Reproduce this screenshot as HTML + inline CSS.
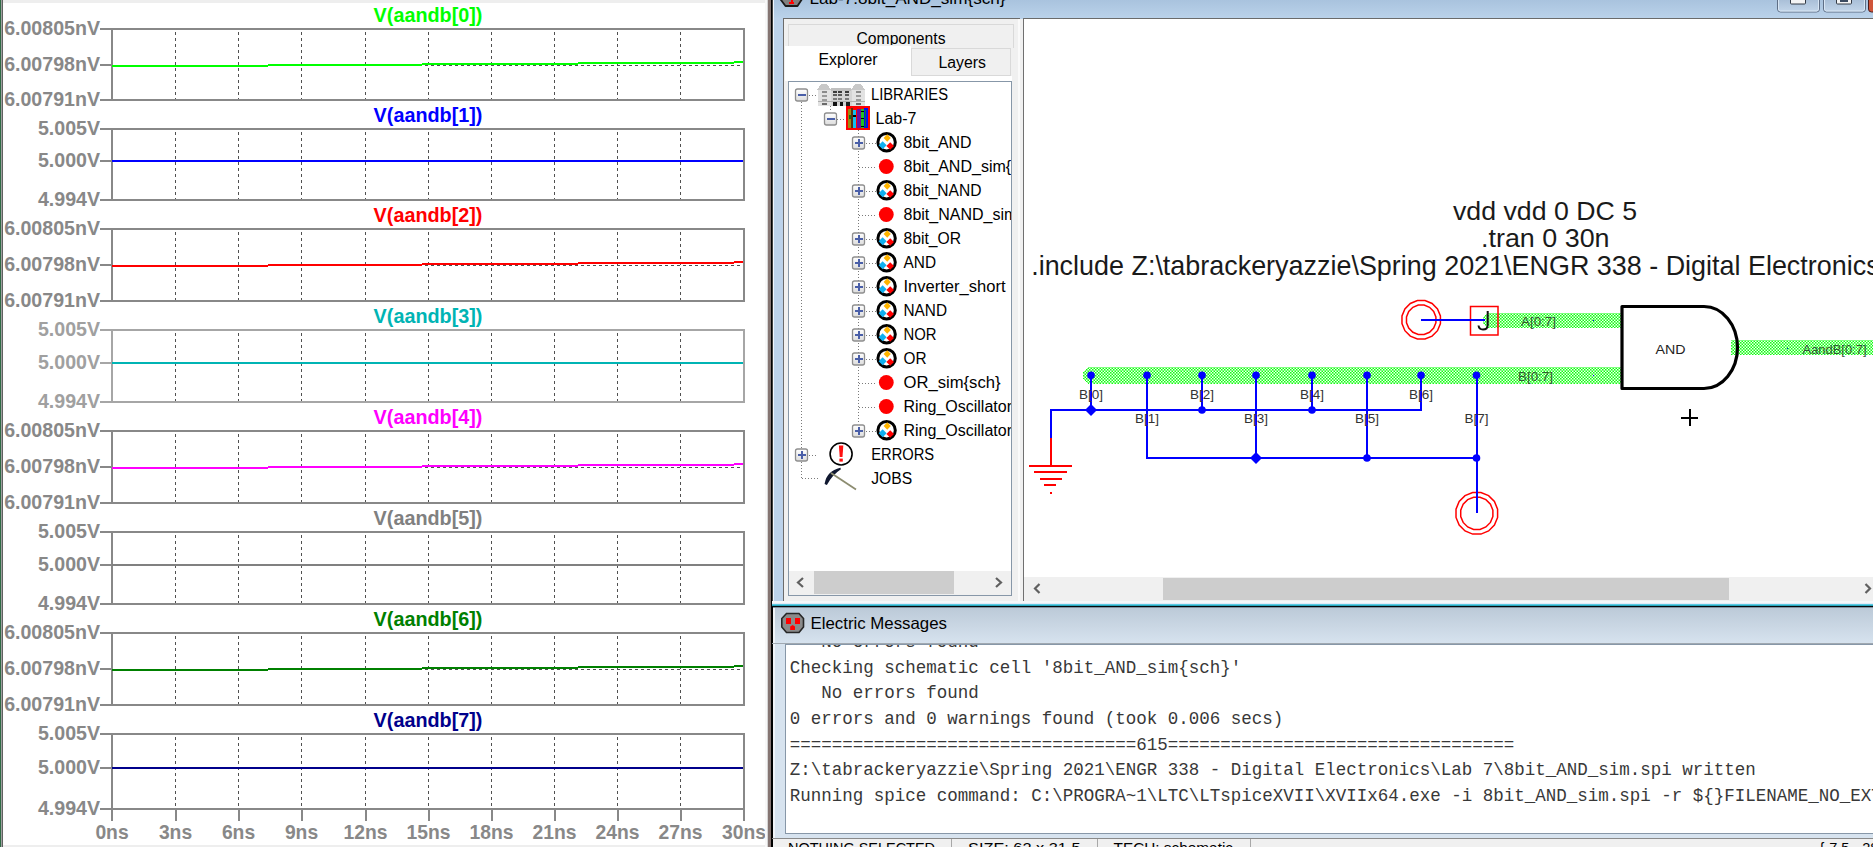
<!DOCTYPE html><html><head><meta charset="utf-8"><style>html,body{margin:0;padding:0;background:#fff;overflow:hidden}svg{display:block}text{white-space:pre}</style></head><body>
<svg width="1873" height="847" viewBox="0 0 1873 847" shape-rendering="crispEdges">
<defs>
<pattern id="bus" patternUnits="userSpaceOnUse" width="3" height="3"><rect x="0" y="0" width="3" height="3" fill="#80ff80"/><rect x="0" y="0" width="1" height="1" fill="#10ff10"/><rect x="2" y="2" width="1" height="1" fill="#10ff10"/><rect x="2" y="0" width="1" height="1" fill="#f0fff0"/><rect x="0" y="2" width="1" height="1" fill="#f0fff0"/></pattern>
<linearGradient id="tb" x1="0" y1="0" x2="0" y2="1"><stop offset="0" stop-color="#a9c3de"/><stop offset="1" stop-color="#bad2ea"/></linearGradient>
<linearGradient id="mb" x1="0" y1="0" x2="0" y2="1"><stop offset="0" stop-color="#bccad8"/><stop offset="1" stop-color="#d7e3ef"/></linearGradient>
<linearGradient id="btn" x1="0" y1="0" x2="0" y2="1"><stop offset="0" stop-color="#9fb6d0"/><stop offset="1" stop-color="#c3d6ea"/></linearGradient>
<linearGradient id="exp" x1="0" y1="0" x2="0" y2="1"><stop offset="0" stop-color="#ffffff"/><stop offset="1" stop-color="#dcdcdc"/></linearGradient>
<clipPath id="cv"><rect x="1025" y="19" width="848" height="558"/></clipPath>
<clipPath id="tree"><rect x="789" y="82" width="222" height="489"/></clipPath>
<clipPath id="msg"><rect x="786" y="645" width="1087" height="188"/></clipPath>
<clipPath id="ttl"><rect x="772" y="0" width="1101" height="18"/></clipPath>
</defs>
<rect x="0" y="0" width="767" height="847" fill="#ffffff" />
<rect x="3" y="0" width="764" height="3" fill="#eeeeee" />
<rect x="3" y="845" width="764" height="2" fill="#eeeeee" />
<rect x="0" y="0" width="1" height="847" fill="#2f6b45" />
<rect x="1" y="0" width="1" height="847" fill="#a0a0a0" />
<rect x="2" y="0" width="1" height="847" fill="#606060" />
<line x1="175.5" y1="32" x2="175.5" y2="100" stroke="#505050" stroke-width="1" stroke-dasharray="3 3"/>
<line x1="238.5" y1="32" x2="238.5" y2="100" stroke="#505050" stroke-width="1" stroke-dasharray="3 3"/>
<line x1="301.5" y1="32" x2="301.5" y2="100" stroke="#505050" stroke-width="1" stroke-dasharray="3 3"/>
<line x1="365.5" y1="32" x2="365.5" y2="100" stroke="#505050" stroke-width="1" stroke-dasharray="3 3"/>
<line x1="428.5" y1="32" x2="428.5" y2="100" stroke="#505050" stroke-width="1" stroke-dasharray="3 3"/>
<line x1="491.5" y1="32" x2="491.5" y2="100" stroke="#505050" stroke-width="1" stroke-dasharray="3 3"/>
<line x1="554.5" y1="32" x2="554.5" y2="100" stroke="#505050" stroke-width="1" stroke-dasharray="3 3"/>
<line x1="617.5" y1="32" x2="617.5" y2="100" stroke="#505050" stroke-width="1" stroke-dasharray="3 3"/>
<line x1="680.5" y1="32" x2="680.5" y2="100" stroke="#505050" stroke-width="1" stroke-dasharray="3 3"/>
<line x1="113" y1="65.5" x2="743" y2="65.5" stroke="#505050" stroke-width="1" stroke-dasharray="3 3"/>
<rect x="111" y="28" width="634" height="2" fill="#888888" />
<rect x="111" y="99" width="634" height="2" fill="#888888" />
<rect x="111" y="28" width="2" height="72" fill="#888888" />
<rect x="743" y="28" width="2" height="72" fill="#888888" />
<rect x="100" y="28" width="11" height="2" fill="#888888" />
<rect x="100" y="64" width="11" height="2" fill="#888888" />
<rect x="100" y="99" width="11" height="2" fill="#888888" />
<rect x="112" y="65" width="156" height="2" fill="#00ff00" />
<rect x="268" y="64" width="154" height="2" fill="#00ff00" />
<rect x="422" y="63" width="156" height="2" fill="#00ff00" />
<rect x="578" y="62" width="156" height="2" fill="#00ff00" />
<rect x="734" y="61" width="9" height="2" fill="#00ff00" />
<text x="100" y="35" font-family="Liberation Sans" font-size="19.6" fill="#888888" font-weight="bold" text-anchor="end" >6.00805nV</text>
<text x="100" y="71" font-family="Liberation Sans" font-size="19.6" fill="#888888" font-weight="bold" text-anchor="end" >6.00798nV</text>
<text x="100" y="106" font-family="Liberation Sans" font-size="19.6" fill="#888888" font-weight="bold" text-anchor="end" >6.00791nV</text>
<text x="428" y="22" font-family="Liberation Sans" font-size="19.8" fill="#00ff00" font-weight="bold" text-anchor="middle" >V(aandb[0])</text>
<line x1="175.5" y1="132" x2="175.5" y2="200" stroke="#505050" stroke-width="1" stroke-dasharray="3 3"/>
<line x1="238.5" y1="132" x2="238.5" y2="200" stroke="#505050" stroke-width="1" stroke-dasharray="3 3"/>
<line x1="301.5" y1="132" x2="301.5" y2="200" stroke="#505050" stroke-width="1" stroke-dasharray="3 3"/>
<line x1="365.5" y1="132" x2="365.5" y2="200" stroke="#505050" stroke-width="1" stroke-dasharray="3 3"/>
<line x1="428.5" y1="132" x2="428.5" y2="200" stroke="#505050" stroke-width="1" stroke-dasharray="3 3"/>
<line x1="491.5" y1="132" x2="491.5" y2="200" stroke="#505050" stroke-width="1" stroke-dasharray="3 3"/>
<line x1="554.5" y1="132" x2="554.5" y2="200" stroke="#505050" stroke-width="1" stroke-dasharray="3 3"/>
<line x1="617.5" y1="132" x2="617.5" y2="200" stroke="#505050" stroke-width="1" stroke-dasharray="3 3"/>
<line x1="680.5" y1="132" x2="680.5" y2="200" stroke="#505050" stroke-width="1" stroke-dasharray="3 3"/>
<line x1="113" y1="161.5" x2="743" y2="161.5" stroke="#505050" stroke-width="1" stroke-dasharray="3 3"/>
<rect x="111" y="128" width="634" height="2" fill="#888888" />
<rect x="111" y="199" width="634" height="2" fill="#888888" />
<rect x="111" y="128" width="2" height="72" fill="#888888" />
<rect x="743" y="128" width="2" height="72" fill="#888888" />
<rect x="100" y="128" width="11" height="2" fill="#888888" />
<rect x="100" y="160" width="11" height="2" fill="#888888" />
<rect x="100" y="199" width="11" height="2" fill="#888888" />
<rect x="112" y="160" width="631" height="2" fill="#0000ff" />
<text x="100" y="135" font-family="Liberation Sans" font-size="19.6" fill="#888888" font-weight="bold" text-anchor="end" >5.005V</text>
<text x="100" y="167" font-family="Liberation Sans" font-size="19.6" fill="#888888" font-weight="bold" text-anchor="end" >5.000V</text>
<text x="100" y="206" font-family="Liberation Sans" font-size="19.6" fill="#888888" font-weight="bold" text-anchor="end" >4.994V</text>
<text x="428" y="122" font-family="Liberation Sans" font-size="19.8" fill="#0000ff" font-weight="bold" text-anchor="middle" >V(aandb[1])</text>
<line x1="175.5" y1="232" x2="175.5" y2="301" stroke="#505050" stroke-width="1" stroke-dasharray="3 3"/>
<line x1="238.5" y1="232" x2="238.5" y2="301" stroke="#505050" stroke-width="1" stroke-dasharray="3 3"/>
<line x1="301.5" y1="232" x2="301.5" y2="301" stroke="#505050" stroke-width="1" stroke-dasharray="3 3"/>
<line x1="365.5" y1="232" x2="365.5" y2="301" stroke="#505050" stroke-width="1" stroke-dasharray="3 3"/>
<line x1="428.5" y1="232" x2="428.5" y2="301" stroke="#505050" stroke-width="1" stroke-dasharray="3 3"/>
<line x1="491.5" y1="232" x2="491.5" y2="301" stroke="#505050" stroke-width="1" stroke-dasharray="3 3"/>
<line x1="554.5" y1="232" x2="554.5" y2="301" stroke="#505050" stroke-width="1" stroke-dasharray="3 3"/>
<line x1="617.5" y1="232" x2="617.5" y2="301" stroke="#505050" stroke-width="1" stroke-dasharray="3 3"/>
<line x1="680.5" y1="232" x2="680.5" y2="301" stroke="#505050" stroke-width="1" stroke-dasharray="3 3"/>
<line x1="113" y1="265.5" x2="743" y2="265.5" stroke="#505050" stroke-width="1" stroke-dasharray="3 3"/>
<rect x="111" y="228" width="634" height="2" fill="#888888" />
<rect x="111" y="300" width="634" height="2" fill="#888888" />
<rect x="111" y="228" width="2" height="73" fill="#888888" />
<rect x="743" y="228" width="2" height="73" fill="#888888" />
<rect x="100" y="228" width="11" height="2" fill="#888888" />
<rect x="100" y="264" width="11" height="2" fill="#888888" />
<rect x="100" y="300" width="11" height="2" fill="#888888" />
<rect x="112" y="265" width="156" height="2" fill="#ff0000" />
<rect x="268" y="264" width="154" height="2" fill="#ff0000" />
<rect x="422" y="263" width="156" height="2" fill="#ff0000" />
<rect x="578" y="262" width="156" height="2" fill="#ff0000" />
<rect x="734" y="261" width="9" height="2" fill="#ff0000" />
<text x="100" y="235" font-family="Liberation Sans" font-size="19.6" fill="#888888" font-weight="bold" text-anchor="end" >6.00805nV</text>
<text x="100" y="271" font-family="Liberation Sans" font-size="19.6" fill="#888888" font-weight="bold" text-anchor="end" >6.00798nV</text>
<text x="100" y="307" font-family="Liberation Sans" font-size="19.6" fill="#888888" font-weight="bold" text-anchor="end" >6.00791nV</text>
<text x="428" y="222" font-family="Liberation Sans" font-size="19.8" fill="#ff0000" font-weight="bold" text-anchor="middle" >V(aandb[2])</text>
<line x1="175.5" y1="333" x2="175.5" y2="402" stroke="#505050" stroke-width="1" stroke-dasharray="3 3"/>
<line x1="238.5" y1="333" x2="238.5" y2="402" stroke="#505050" stroke-width="1" stroke-dasharray="3 3"/>
<line x1="301.5" y1="333" x2="301.5" y2="402" stroke="#505050" stroke-width="1" stroke-dasharray="3 3"/>
<line x1="365.5" y1="333" x2="365.5" y2="402" stroke="#505050" stroke-width="1" stroke-dasharray="3 3"/>
<line x1="428.5" y1="333" x2="428.5" y2="402" stroke="#505050" stroke-width="1" stroke-dasharray="3 3"/>
<line x1="491.5" y1="333" x2="491.5" y2="402" stroke="#505050" stroke-width="1" stroke-dasharray="3 3"/>
<line x1="554.5" y1="333" x2="554.5" y2="402" stroke="#505050" stroke-width="1" stroke-dasharray="3 3"/>
<line x1="617.5" y1="333" x2="617.5" y2="402" stroke="#505050" stroke-width="1" stroke-dasharray="3 3"/>
<line x1="680.5" y1="333" x2="680.5" y2="402" stroke="#505050" stroke-width="1" stroke-dasharray="3 3"/>
<line x1="113" y1="363.5" x2="743" y2="363.5" stroke="#505050" stroke-width="1" stroke-dasharray="3 3"/>
<rect x="111" y="329" width="634" height="2" fill="#a6a6a6" />
<rect x="111" y="401" width="634" height="2" fill="#a6a6a6" />
<rect x="111" y="329" width="2" height="73" fill="#a6a6a6" />
<rect x="743" y="329" width="2" height="73" fill="#a6a6a6" />
<rect x="100" y="329" width="11" height="2" fill="#a6a6a6" />
<rect x="100" y="362" width="11" height="2" fill="#a6a6a6" />
<rect x="100" y="401" width="11" height="2" fill="#a6a6a6" />
<rect x="112" y="362" width="631" height="2" fill="#00b4b4" />
<text x="100" y="336" font-family="Liberation Sans" font-size="19.6" fill="#a0a0a0" font-weight="bold" text-anchor="end" >5.005V</text>
<text x="100" y="369" font-family="Liberation Sans" font-size="19.6" fill="#a0a0a0" font-weight="bold" text-anchor="end" >5.000V</text>
<text x="100" y="408" font-family="Liberation Sans" font-size="19.6" fill="#a0a0a0" font-weight="bold" text-anchor="end" >4.994V</text>
<text x="428" y="323" font-family="Liberation Sans" font-size="19.8" fill="#00b4b4" font-weight="bold" text-anchor="middle" >V(aandb[3])</text>
<line x1="175.5" y1="434" x2="175.5" y2="503" stroke="#505050" stroke-width="1" stroke-dasharray="3 3"/>
<line x1="238.5" y1="434" x2="238.5" y2="503" stroke="#505050" stroke-width="1" stroke-dasharray="3 3"/>
<line x1="301.5" y1="434" x2="301.5" y2="503" stroke="#505050" stroke-width="1" stroke-dasharray="3 3"/>
<line x1="365.5" y1="434" x2="365.5" y2="503" stroke="#505050" stroke-width="1" stroke-dasharray="3 3"/>
<line x1="428.5" y1="434" x2="428.5" y2="503" stroke="#505050" stroke-width="1" stroke-dasharray="3 3"/>
<line x1="491.5" y1="434" x2="491.5" y2="503" stroke="#505050" stroke-width="1" stroke-dasharray="3 3"/>
<line x1="554.5" y1="434" x2="554.5" y2="503" stroke="#505050" stroke-width="1" stroke-dasharray="3 3"/>
<line x1="617.5" y1="434" x2="617.5" y2="503" stroke="#505050" stroke-width="1" stroke-dasharray="3 3"/>
<line x1="680.5" y1="434" x2="680.5" y2="503" stroke="#505050" stroke-width="1" stroke-dasharray="3 3"/>
<line x1="113" y1="467.5" x2="743" y2="467.5" stroke="#505050" stroke-width="1" stroke-dasharray="3 3"/>
<rect x="111" y="430" width="634" height="2" fill="#888888" />
<rect x="111" y="502" width="634" height="2" fill="#888888" />
<rect x="111" y="430" width="2" height="73" fill="#888888" />
<rect x="743" y="430" width="2" height="73" fill="#888888" />
<rect x="100" y="430" width="11" height="2" fill="#888888" />
<rect x="100" y="466" width="11" height="2" fill="#888888" />
<rect x="100" y="502" width="11" height="2" fill="#888888" />
<rect x="112" y="467" width="156" height="2" fill="#ff00ff" />
<rect x="268" y="466" width="154" height="2" fill="#ff00ff" />
<rect x="422" y="465" width="156" height="2" fill="#ff00ff" />
<rect x="578" y="464" width="156" height="2" fill="#ff00ff" />
<rect x="734" y="463" width="9" height="2" fill="#ff00ff" />
<text x="100" y="437" font-family="Liberation Sans" font-size="19.6" fill="#888888" font-weight="bold" text-anchor="end" >6.00805nV</text>
<text x="100" y="473" font-family="Liberation Sans" font-size="19.6" fill="#888888" font-weight="bold" text-anchor="end" >6.00798nV</text>
<text x="100" y="509" font-family="Liberation Sans" font-size="19.6" fill="#888888" font-weight="bold" text-anchor="end" >6.00791nV</text>
<text x="428" y="424" font-family="Liberation Sans" font-size="19.8" fill="#ff00ff" font-weight="bold" text-anchor="middle" >V(aandb[4])</text>
<line x1="175.5" y1="535" x2="175.5" y2="604" stroke="#505050" stroke-width="1" stroke-dasharray="3 3"/>
<line x1="238.5" y1="535" x2="238.5" y2="604" stroke="#505050" stroke-width="1" stroke-dasharray="3 3"/>
<line x1="301.5" y1="535" x2="301.5" y2="604" stroke="#505050" stroke-width="1" stroke-dasharray="3 3"/>
<line x1="365.5" y1="535" x2="365.5" y2="604" stroke="#505050" stroke-width="1" stroke-dasharray="3 3"/>
<line x1="428.5" y1="535" x2="428.5" y2="604" stroke="#505050" stroke-width="1" stroke-dasharray="3 3"/>
<line x1="491.5" y1="535" x2="491.5" y2="604" stroke="#505050" stroke-width="1" stroke-dasharray="3 3"/>
<line x1="554.5" y1="535" x2="554.5" y2="604" stroke="#505050" stroke-width="1" stroke-dasharray="3 3"/>
<line x1="617.5" y1="535" x2="617.5" y2="604" stroke="#505050" stroke-width="1" stroke-dasharray="3 3"/>
<line x1="680.5" y1="535" x2="680.5" y2="604" stroke="#505050" stroke-width="1" stroke-dasharray="3 3"/>
<line x1="113" y1="565.5" x2="743" y2="565.5" stroke="#505050" stroke-width="1" stroke-dasharray="3 3"/>
<rect x="111" y="531" width="634" height="2" fill="#888888" />
<rect x="111" y="603" width="634" height="2" fill="#888888" />
<rect x="111" y="531" width="2" height="73" fill="#888888" />
<rect x="743" y="531" width="2" height="73" fill="#888888" />
<rect x="100" y="531" width="11" height="2" fill="#888888" />
<rect x="100" y="564" width="11" height="2" fill="#888888" />
<rect x="100" y="603" width="11" height="2" fill="#888888" />
<rect x="112" y="564" width="631" height="2" fill="#808080" />
<text x="100" y="538" font-family="Liberation Sans" font-size="19.6" fill="#888888" font-weight="bold" text-anchor="end" >5.005V</text>
<text x="100" y="571" font-family="Liberation Sans" font-size="19.6" fill="#888888" font-weight="bold" text-anchor="end" >5.000V</text>
<text x="100" y="610" font-family="Liberation Sans" font-size="19.6" fill="#888888" font-weight="bold" text-anchor="end" >4.994V</text>
<text x="428" y="525" font-family="Liberation Sans" font-size="19.8" fill="#808080" font-weight="bold" text-anchor="middle" >V(aandb[5])</text>
<line x1="175.5" y1="636" x2="175.5" y2="705" stroke="#505050" stroke-width="1" stroke-dasharray="3 3"/>
<line x1="238.5" y1="636" x2="238.5" y2="705" stroke="#505050" stroke-width="1" stroke-dasharray="3 3"/>
<line x1="301.5" y1="636" x2="301.5" y2="705" stroke="#505050" stroke-width="1" stroke-dasharray="3 3"/>
<line x1="365.5" y1="636" x2="365.5" y2="705" stroke="#505050" stroke-width="1" stroke-dasharray="3 3"/>
<line x1="428.5" y1="636" x2="428.5" y2="705" stroke="#505050" stroke-width="1" stroke-dasharray="3 3"/>
<line x1="491.5" y1="636" x2="491.5" y2="705" stroke="#505050" stroke-width="1" stroke-dasharray="3 3"/>
<line x1="554.5" y1="636" x2="554.5" y2="705" stroke="#505050" stroke-width="1" stroke-dasharray="3 3"/>
<line x1="617.5" y1="636" x2="617.5" y2="705" stroke="#505050" stroke-width="1" stroke-dasharray="3 3"/>
<line x1="680.5" y1="636" x2="680.5" y2="705" stroke="#505050" stroke-width="1" stroke-dasharray="3 3"/>
<line x1="113" y1="669.5" x2="743" y2="669.5" stroke="#505050" stroke-width="1" stroke-dasharray="3 3"/>
<rect x="111" y="632" width="634" height="2" fill="#888888" />
<rect x="111" y="704" width="634" height="2" fill="#888888" />
<rect x="111" y="632" width="2" height="73" fill="#888888" />
<rect x="743" y="632" width="2" height="73" fill="#888888" />
<rect x="100" y="632" width="11" height="2" fill="#888888" />
<rect x="100" y="668" width="11" height="2" fill="#888888" />
<rect x="100" y="704" width="11" height="2" fill="#888888" />
<rect x="112" y="669" width="156" height="2" fill="#008000" />
<rect x="268" y="668" width="154" height="2" fill="#008000" />
<rect x="422" y="667" width="156" height="2" fill="#008000" />
<rect x="578" y="666" width="156" height="2" fill="#008000" />
<rect x="734" y="665" width="9" height="2" fill="#008000" />
<text x="100" y="639" font-family="Liberation Sans" font-size="19.6" fill="#888888" font-weight="bold" text-anchor="end" >6.00805nV</text>
<text x="100" y="675" font-family="Liberation Sans" font-size="19.6" fill="#888888" font-weight="bold" text-anchor="end" >6.00798nV</text>
<text x="100" y="711" font-family="Liberation Sans" font-size="19.6" fill="#888888" font-weight="bold" text-anchor="end" >6.00791nV</text>
<text x="428" y="626" font-family="Liberation Sans" font-size="19.8" fill="#008000" font-weight="bold" text-anchor="middle" >V(aandb[6])</text>
<line x1="175.5" y1="737" x2="175.5" y2="809" stroke="#505050" stroke-width="1" stroke-dasharray="3 3"/>
<line x1="238.5" y1="737" x2="238.5" y2="809" stroke="#505050" stroke-width="1" stroke-dasharray="3 3"/>
<line x1="301.5" y1="737" x2="301.5" y2="809" stroke="#505050" stroke-width="1" stroke-dasharray="3 3"/>
<line x1="365.5" y1="737" x2="365.5" y2="809" stroke="#505050" stroke-width="1" stroke-dasharray="3 3"/>
<line x1="428.5" y1="737" x2="428.5" y2="809" stroke="#505050" stroke-width="1" stroke-dasharray="3 3"/>
<line x1="491.5" y1="737" x2="491.5" y2="809" stroke="#505050" stroke-width="1" stroke-dasharray="3 3"/>
<line x1="554.5" y1="737" x2="554.5" y2="809" stroke="#505050" stroke-width="1" stroke-dasharray="3 3"/>
<line x1="617.5" y1="737" x2="617.5" y2="809" stroke="#505050" stroke-width="1" stroke-dasharray="3 3"/>
<line x1="680.5" y1="737" x2="680.5" y2="809" stroke="#505050" stroke-width="1" stroke-dasharray="3 3"/>
<line x1="113" y1="768.5" x2="743" y2="768.5" stroke="#505050" stroke-width="1" stroke-dasharray="3 3"/>
<rect x="111" y="733" width="634" height="2" fill="#888888" />
<rect x="111" y="808" width="634" height="2" fill="#888888" />
<rect x="111" y="733" width="2" height="76" fill="#888888" />
<rect x="743" y="733" width="2" height="76" fill="#888888" />
<rect x="100" y="733" width="11" height="2" fill="#888888" />
<rect x="100" y="767" width="11" height="2" fill="#888888" />
<rect x="100" y="808" width="11" height="2" fill="#888888" />
<rect x="112" y="767" width="631" height="2" fill="#00008b" />
<text x="100" y="740" font-family="Liberation Sans" font-size="19.6" fill="#888888" font-weight="bold" text-anchor="end" >5.005V</text>
<text x="100" y="774" font-family="Liberation Sans" font-size="19.6" fill="#888888" font-weight="bold" text-anchor="end" >5.000V</text>
<text x="100" y="815" font-family="Liberation Sans" font-size="19.6" fill="#888888" font-weight="bold" text-anchor="end" >4.994V</text>
<text x="428" y="727" font-family="Liberation Sans" font-size="19.8" fill="#00008b" font-weight="bold" text-anchor="middle" >V(aandb[7])</text>
<rect x="111" y="808" width="2" height="13" fill="#888888" />
<rect x="175" y="808" width="2" height="13" fill="#888888" />
<rect x="238" y="808" width="2" height="13" fill="#888888" />
<rect x="301" y="808" width="2" height="13" fill="#888888" />
<rect x="365" y="808" width="2" height="13" fill="#888888" />
<rect x="428" y="808" width="2" height="13" fill="#888888" />
<rect x="491" y="808" width="2" height="13" fill="#888888" />
<rect x="554" y="808" width="2" height="13" fill="#888888" />
<rect x="617" y="808" width="2" height="13" fill="#888888" />
<rect x="680" y="808" width="2" height="13" fill="#888888" />
<rect x="743" y="808" width="2" height="13" fill="#888888" />
<text x="112" y="839" font-family="Liberation Sans" font-size="19.3" fill="#888888" font-weight="bold" text-anchor="middle" >0ns</text>
<text x="175.5" y="839" font-family="Liberation Sans" font-size="19.3" fill="#888888" font-weight="bold" text-anchor="middle" >3ns</text>
<text x="238.5" y="839" font-family="Liberation Sans" font-size="19.3" fill="#888888" font-weight="bold" text-anchor="middle" >6ns</text>
<text x="301.5" y="839" font-family="Liberation Sans" font-size="19.3" fill="#888888" font-weight="bold" text-anchor="middle" >9ns</text>
<text x="365.5" y="839" font-family="Liberation Sans" font-size="19.3" fill="#888888" font-weight="bold" text-anchor="middle" >12ns</text>
<text x="428.5" y="839" font-family="Liberation Sans" font-size="19.3" fill="#888888" font-weight="bold" text-anchor="middle" >15ns</text>
<text x="491.5" y="839" font-family="Liberation Sans" font-size="19.3" fill="#888888" font-weight="bold" text-anchor="middle" >18ns</text>
<text x="554.5" y="839" font-family="Liberation Sans" font-size="19.3" fill="#888888" font-weight="bold" text-anchor="middle" >21ns</text>
<text x="617.5" y="839" font-family="Liberation Sans" font-size="19.3" fill="#888888" font-weight="bold" text-anchor="middle" >24ns</text>
<text x="680.5" y="839" font-family="Liberation Sans" font-size="19.3" fill="#888888" font-weight="bold" text-anchor="middle" >27ns</text>
<text x="744" y="839" font-family="Liberation Sans" font-size="19.3" fill="#888888" font-weight="bold" text-anchor="middle" >30ns</text>
<rect x="765" y="0" width="2" height="847" fill="#f8f8f8" />
<rect x="767" y="0" width="1" height="847" fill="#d4d4d4" />
<rect x="768" y="0" width="3" height="847" fill="#857572" />
<rect x="771" y="0" width="1" height="847" fill="#000000" />
<rect x="773" y="0" width="1" height="606" fill="#f0f6fc" />
<rect x="772" y="0" width="1" height="606" fill="#404040" />
<rect x="774" y="0" width="1099" height="18" fill="url(#tb)" />
<rect x="774" y="18" width="1099" height="588" fill="#bcd2ea" />
<polygon points="778,-4 804,-4 797.5,6 785.5,6" fill="#808080" stroke="#1a1a1a" stroke-width="1.8" stroke-linejoin="round" shape-rendering="geometricPrecision"/>
<rect x="789" y="1.5" width="5" height="2.5" fill="#ff0000" />
<rect x="790.5" y="0" width="2" height="2" fill="#ff0000" />
<text x="809.5" y="4" font-family="Liberation Sans" font-size="17" fill="#000" font-weight="normal" text-anchor="start" textLength="196" lengthAdjust="spacingAndGlyphs" clip-path="url(#ttl)">Lab-7:8bit_AND_sim{sch}</text>
<rect x="1777.5" y="-5" width="42" height="17" rx="3" fill="url(#btn)" stroke="#5f6f86" stroke-width="1" shape-rendering="geometricPrecision"/>
<rect x="1778.5" y="-4" width="40" height="15" rx="2" fill="none" stroke="#d8e6f4" stroke-width="1" shape-rendering="geometricPrecision"/>
<rect x="1823.5" y="-5" width="42" height="17" rx="3" fill="url(#btn)" stroke="#5f6f86" stroke-width="1" shape-rendering="geometricPrecision"/>
<rect x="1824.5" y="-4" width="40" height="15" rx="2" fill="none" stroke="#d8e6f4" stroke-width="1" shape-rendering="geometricPrecision"/>
<rect x="1790.5" y="-3" width="15" height="7" rx="1" fill="#f4f4f4" stroke="#333a44" stroke-width="1" shape-rendering="geometricPrecision"/>
<rect x="1836.5" y="-3" width="15" height="7" rx="1" fill="#f4f4f4" stroke="#333a44" stroke-width="1" shape-rendering="geometricPrecision"/>
<rect x="1840" y="0" width="8" height="2" fill="#3a4a60" />
<rect x="1868.5" y="-5" width="12" height="17" rx="3" fill="#d0553a" stroke="#4a1d1d" stroke-width="1" shape-rendering="geometricPrecision"/>
<rect x="783" y="18" width="237" height="583" fill="#f0f0f0" />
<rect x="783" y="18" width="237" height="1" fill="#6b6b6b" />
<rect x="783" y="18" width="1" height="583" fill="#6b6b6b" />
<rect x="1018" y="19" width="2" height="582" fill="#fafafa" />
<rect x="788" y="24" width="226" height="24" fill="#f0f0f0" />
<rect x="788" y="24" width="226" height="1" fill="#d9d9d9" />
<rect x="788" y="24" width="1" height="24" fill="#d9d9d9" />
<rect x="1013" y="24" width="1" height="24" fill="#d9d9d9" />
<text x="856.5" y="44" font-family="Liberation Sans" font-size="15.7" fill="#000" font-weight="normal" text-anchor="start" textLength="89" lengthAdjust="spacingAndGlyphs" clip-path="url(#cclip)">Components</text>
<clipPath id="cclip"><rect x="788" y="24" width="226" height="21"/></clipPath>
<rect x="785" y="46" width="126" height="35" fill="#ffffff" />
<rect x="911" y="48" width="100" height="28" fill="#f0f0f0" />
<rect x="911" y="48" width="100" height="1" fill="#d9d9d9" />
<rect x="911" y="48" width="1" height="28" fill="#d9d9d9" />
<rect x="1010" y="48" width="1" height="28" fill="#d9d9d9" />
<rect x="911" y="75" width="100" height="1" fill="#d9d9d9" />
<rect x="785" y="76" width="227" height="5" fill="#ffffff" />
<text x="818.5" y="65" font-family="Liberation Sans" font-size="15.8" fill="#000" font-weight="normal" text-anchor="start" textLength="59" lengthAdjust="spacingAndGlyphs" >Explorer</text>
<text x="938.5" y="67.5" font-family="Liberation Sans" font-size="15.8" fill="#000" font-weight="normal" text-anchor="start" textLength="47.5" lengthAdjust="spacingAndGlyphs" >Layers</text>
<rect x="788" y="81" width="224" height="515" fill="#ffffff" />
<rect x="788" y="81" width="224" height="1" fill="#8797a8" />
<rect x="788" y="81" width="1" height="515" fill="#8797a8" />
<rect x="1011" y="81" width="1" height="515" fill="#8797a8" />
<rect x="788" y="595" width="224" height="1" fill="#8797a8" />
<rect x="789" y="571" width="222" height="24" fill="#f0f0f0" />
<rect x="814" y="571" width="140" height="23" fill="#cdcdcd" />
<path d="M803,578 L798,582.5 L803,587" fill="none" stroke="#606060" stroke-width="2.2" shape-rendering="geometricPrecision"/>
<path d="M996,578 L1001,582.5 L996,587" fill="none" stroke="#606060" stroke-width="2.2" shape-rendering="geometricPrecision"/>
<rect x="1020" y="19" width="3" height="582" fill="#f0f0f0" />
<rect x="1023" y="18" width="850" height="583" fill="#ffffff" />
<rect x="1023" y="18" width="850" height="1" fill="#6b6b6b" />
<rect x="1023" y="18" width="1" height="583" fill="#707070" />
<rect x="1024" y="577" width="849" height="24" fill="#f0f0f0" />
<rect x="1163" y="578" width="566" height="22" fill="#cdcdcd" />
<path d="M1039.5,584 L1035,588.5 L1039.5,593" fill="none" stroke="#606060" stroke-width="2.2" shape-rendering="geometricPrecision"/>
<path d="M1865.5,584 L1870,588.5 L1865.5,593" fill="none" stroke="#606060" stroke-width="2.2" shape-rendering="geometricPrecision"/>
<rect x="772" y="601" width="1101" height="2" fill="#f6f8fa" />
<rect x="772" y="603" width="1101" height="1" fill="#e4eaf6" />
<rect x="772" y="604" width="1101" height="1" fill="#5ccae2" />
<rect x="772" y="605" width="1101" height="1" fill="#2aa6bc" />
<rect x="772" y="606" width="1101" height="1" fill="#050a0c" />
<rect x="772" y="607" width="1101" height="1" fill="#8090a0" />
<rect x="772" y="608" width="1101" height="239" fill="#d7e3ef" />
<rect x="772" y="608" width="1101" height="36" fill="url(#mb)" />
<rect x="772" y="607" width="1" height="240" fill="#000000" />
<rect x="773" y="608" width="2" height="239" fill="#f0f4f8" />
<rect x="772" y="643" width="1101" height="1" fill="#a0a8b0" />
<text x="810.5" y="629" font-family="Liberation Sans" font-size="16.5" fill="#000" font-weight="normal" text-anchor="start" textLength="136.5" lengthAdjust="spacingAndGlyphs" >Electric Messages</text>
<polygon points="786.5,613.5 799,613.5 803.5,618.5 803.5,627 799,632.5 786.5,632.5 781.8,627 781.8,618.5" fill="#8a8a8a" stroke="#262626" stroke-width="1.6" shape-rendering="geometricPrecision"/>
<rect x="786" y="617.5" width="4.5" height="6.5" fill="#ff0000" />
<rect x="795" y="617.5" width="4.5" height="6.5" fill="#ff0000" />
<polygon points="790.2,630 790.2,626.5 792.6,625 795,626.5 795,630" fill="#ff0000" shape-rendering="geometricPrecision"/>
<rect x="785" y="644" width="1088" height="190" fill="#ffffff" />
<rect x="785" y="644" width="1088" height="1" fill="#8797a8" />
<rect x="785" y="644" width="1" height="190" fill="#8797a8" />
<rect x="785" y="833" width="1088" height="1" fill="#8797a8" />
<g clip-path="url(#msg)">
<text x="789.7" y="647.1" font-family="Liberation Mono" font-size="17.5" fill="#383838" font-weight="normal" text-anchor="start" >   No errors found</text>
<text x="789.7" y="672.8000000000001" font-family="Liberation Mono" font-size="17.5" fill="#383838" font-weight="normal" text-anchor="start" >Checking schematic cell '8bit_AND_sim{sch}'</text>
<text x="789.7" y="698.4" font-family="Liberation Mono" font-size="17.5" fill="#383838" font-weight="normal" text-anchor="start" >   No errors found</text>
<text x="789.7" y="723.9" font-family="Liberation Mono" font-size="17.5" fill="#383838" font-weight="normal" text-anchor="start" >0 errors and 0 warnings found (took 0.006 secs)</text>
<text x="789.7" y="749.5" font-family="Liberation Mono" font-size="17.5" fill="#383838" font-weight="normal" text-anchor="start" >=================================615=================================</text>
<text x="789.7" y="775.1" font-family="Liberation Mono" font-size="17.5" fill="#383838" font-weight="normal" text-anchor="start" >Z:\tabrackeryazzie\Spring 2021\ENGR 338 - Digital Electronics\Lab 7\8bit_AND_sim.spi written</text>
<text x="789.7" y="800.7" font-family="Liberation Mono" font-size="17.5" fill="#383838" font-weight="normal" text-anchor="start" >Running spice command: C:\PROGRA~1\LTC\LTspiceXVII\XVIIx64.exe -i 8bit_AND_sim.spi -r ${}FILENAME_NO_EXT}.raw</text>
</g>
<rect x="772" y="838" width="1101" height="1" fill="#8a8a8a" />
<rect x="773" y="839" width="1100" height="8" fill="#f0f0f0" />
<rect x="951" y="839" width="1" height="8" fill="#a8a8a8" />
<rect x="1097" y="839" width="1" height="8" fill="#a8a8a8" />
<rect x="1250" y="839" width="1" height="8" fill="#a8a8a8" />
<text x="788" y="853" font-family="Liberation Sans" font-size="14.5" fill="#000" font-weight="normal" text-anchor="start" textLength="147" lengthAdjust="spacingAndGlyphs" >NOTHING SELECTED</text>
<text x="968" y="853" font-family="Liberation Sans" font-size="14.5" fill="#000" font-weight="normal" text-anchor="start" textLength="112.5" lengthAdjust="spacingAndGlyphs" >SIZE: 62 x 31.5</text>
<text x="1113.5" y="853" font-family="Liberation Sans" font-size="14.5" fill="#000" font-weight="normal" text-anchor="start" textLength="119.5" lengthAdjust="spacingAndGlyphs" >TECH: schematic</text>
<text x="1819.5" y="853" font-family="Liberation Sans" font-size="14.5" fill="#000" font-weight="normal" text-anchor="start" >{-7.5, -28}</text>
<g clip-path="url(#tree)">
<line x1="801.5" y1="102" x2="801.5" y2="479" stroke="#7a7a7a" stroke-width="1" stroke-dasharray="1 2"/>
<line x1="830.5" y1="106" x2="830.5" y2="112" stroke="#7a7a7a" stroke-width="1" stroke-dasharray="1 2"/>
<line x1="858.5" y1="130" x2="858.5" y2="424" stroke="#7a7a7a" stroke-width="1" stroke-dasharray="1 2"/>
<rect x="795.5" y="89.0" width="12" height="12" rx="2" fill="url(#exp)" stroke="#8e8e8e" stroke-width="1.3" shape-rendering="geometricPrecision"/>
<rect x="798.0" y="94" width="8" height="2" fill="#4a5fa8" />
<line x1="809" y1="95.5" x2="817" y2="95.5" stroke="#7a7a7a" stroke-width="1" stroke-dasharray="1 2"/>
<g>
<rect x="818" y="90" width="47" height="16" fill="#d4d4d4" />
<polygon points="817,90 821,84 827,84 831,90" fill="#c8c8c8"/>
<polygon points="851,90 855,84 861,84 865,90" fill="#c8c8c8"/>
<rect x="831" y="88" width="20" height="3" fill="#c0c0c0" />
<rect x="818" y="90" width="13" height="16" fill="#e2e2e2" />
<rect x="852" y="90" width="13" height="16" fill="#e2e2e2" />
<rect x="822" y="91" width="5" height="2" fill="#8a8a8a" />
<rect x="822" y="95" width="5" height="2" fill="#9a9a9a" />
<rect x="822" y="99" width="5" height="2" fill="#9a9a9a" />
<rect x="822" y="103" width="5" height="2" fill="#6a6a6a" />
<rect x="856" y="91" width="5" height="2" fill="#8a8a8a" />
<rect x="856" y="95" width="5" height="2" fill="#9a9a9a" />
<rect x="856" y="99" width="5" height="2" fill="#9a9a9a" />
<rect x="856" y="103" width="5" height="2" fill="#6a6a6a" />
<rect x="833" y="91" width="4" height="2" fill="#3a3a3a" />
<rect x="833" y="94" width="4" height="2" fill="#5a5a5a" />
<rect x="833" y="98" width="4" height="2" fill="#7a7a7a" />
<rect x="838" y="91" width="4" height="2" fill="#3a3a3a" />
<rect x="838" y="94" width="4" height="2" fill="#5a5a5a" />
<rect x="838" y="98" width="4" height="2" fill="#7a7a7a" />
<rect x="845" y="91" width="4" height="2" fill="#3a3a3a" />
<rect x="845" y="94" width="4" height="2" fill="#5a5a5a" />
<rect x="845" y="98" width="4" height="2" fill="#7a7a7a" />
<rect x="833" y="102" width="4" height="4" fill="#101010" />
<rect x="840" y="102" width="3" height="4" fill="#101010" />
<rect x="846" y="102" width="4" height="4" fill="#202020" />
<rect x="818" y="101" width="47" height="1" fill="#b0b0b0" />
</g>
<text x="871" y="100" font-family="Liberation Sans" font-size="16" fill="#000" font-weight="normal" text-anchor="start" textLength="77" lengthAdjust="spacingAndGlyphs" >LIBRARIES</text>
<rect x="824.5" y="113.0" width="12" height="12" rx="2" fill="url(#exp)" stroke="#8e8e8e" stroke-width="1.3" shape-rendering="geometricPrecision"/>
<rect x="827.0" y="118" width="8" height="2" fill="#4a5fa8" />
<line x1="837" y1="119.5" x2="846" y2="119.5" stroke="#7a7a7a" stroke-width="1" stroke-dasharray="1 2"/>
<rect x="846" y="106" width="24" height="24" fill="#ff0000" />
<rect x="848" y="109" width="3" height="19" fill="#9a8a10" />
<rect x="849" y="115" width="2" height="4" fill="#106a20" />
<rect x="851" y="108" width="2" height="20" fill="#5a3010" />
<rect x="853" y="110" width="3" height="18" fill="#10c0f0" />
<rect x="853" y="115" width="3" height="2" fill="#000" />
<rect x="857" y="109" width="4" height="19" fill="#6a10a0" />
<rect x="861" y="109" width="3" height="19" fill="#20c020" />
<rect x="861" y="111" width="3" height="1" fill="#000" />
<rect x="861" y="118" width="3" height="1" fill="#000" />
<rect x="861" y="126" width="3" height="1" fill="#000" />
<rect x="864" y="108" width="4" height="20" fill="#0010f0" />
<rect x="865" y="110" width="1" height="17" fill="#106a40" />
<text x="875.5" y="123.5" font-family="Liberation Sans" font-size="16" fill="#000" font-weight="normal" text-anchor="start" textLength="41" lengthAdjust="spacingAndGlyphs" >Lab-7</text>
<rect x="852.5" y="137.0" width="12" height="12" rx="2" fill="url(#exp)" stroke="#8e8e8e" stroke-width="1.3" shape-rendering="geometricPrecision"/>
<rect x="855.0" y="142" width="8" height="2" fill="#4a5fa8" />
<rect x="858.0" y="139" width="2" height="8" fill="#4a5fa8" />
<line x1="866" y1="143.5" x2="876" y2="143.5" stroke="#7a7a7a" stroke-width="1" stroke-dasharray="1 2"/>
<g shape-rendering="geometricPrecision"><circle cx="886.6" cy="142.2" r="8.7" fill="#fff" stroke="#000" stroke-width="3"/><polygon points="887.2,134.2 890.8000000000001,138.0 887.2,141.79999999999998 883.6,138.0" fill="#ffb400"/><polygon points="882.6,141.2 886.6,145.2 882.6,149.2 878.6,145.2" fill="#10b0f0"/><polygon points="890.2,142.2 894.0,146.0 890.2,149.79999999999998 886.4,146.0" fill="#ff0000"/></g>
<text x="903.5" y="148" font-family="Liberation Sans" font-size="16" fill="#000" font-weight="normal" text-anchor="start" textLength="68" lengthAdjust="spacingAndGlyphs" >8bit_AND</text>
<line x1="859" y1="167.5" x2="876" y2="167.5" stroke="#7a7a7a" stroke-width="1" stroke-dasharray="1 2"/>
<circle cx="886.3" cy="166.5" r="7.4" fill="#ff0000" shape-rendering="geometricPrecision"/>
<text x="903.5" y="172" font-family="Liberation Sans" font-size="16" fill="#000" font-weight="normal" text-anchor="start" >8bit_AND_sim{sch}</text>
<rect x="852.5" y="185.0" width="12" height="12" rx="2" fill="url(#exp)" stroke="#8e8e8e" stroke-width="1.3" shape-rendering="geometricPrecision"/>
<rect x="855.0" y="190" width="8" height="2" fill="#4a5fa8" />
<rect x="858.0" y="187" width="2" height="8" fill="#4a5fa8" />
<line x1="866" y1="191.5" x2="876" y2="191.5" stroke="#7a7a7a" stroke-width="1" stroke-dasharray="1 2"/>
<g shape-rendering="geometricPrecision"><circle cx="886.6" cy="190.2" r="8.7" fill="#fff" stroke="#000" stroke-width="3"/><polygon points="887.2,182.2 890.8000000000001,186.0 887.2,189.79999999999998 883.6,186.0" fill="#ffb400"/><polygon points="882.6,189.2 886.6,193.2 882.6,197.2 878.6,193.2" fill="#10b0f0"/><polygon points="890.2,190.2 894.0,194.0 890.2,197.79999999999998 886.4,194.0" fill="#ff0000"/></g>
<text x="903.5" y="196" font-family="Liberation Sans" font-size="16" fill="#000" font-weight="normal" text-anchor="start" textLength="78" lengthAdjust="spacingAndGlyphs" >8bit_NAND</text>
<line x1="859" y1="215.5" x2="876" y2="215.5" stroke="#7a7a7a" stroke-width="1" stroke-dasharray="1 2"/>
<circle cx="886.3" cy="214.5" r="7.4" fill="#ff0000" shape-rendering="geometricPrecision"/>
<text x="903.5" y="220" font-family="Liberation Sans" font-size="16" fill="#000" font-weight="normal" text-anchor="start" >8bit_NAND_sim{sch}</text>
<rect x="852.5" y="233.0" width="12" height="12" rx="2" fill="url(#exp)" stroke="#8e8e8e" stroke-width="1.3" shape-rendering="geometricPrecision"/>
<rect x="855.0" y="238" width="8" height="2" fill="#4a5fa8" />
<rect x="858.0" y="235" width="2" height="8" fill="#4a5fa8" />
<line x1="866" y1="239.5" x2="876" y2="239.5" stroke="#7a7a7a" stroke-width="1" stroke-dasharray="1 2"/>
<g shape-rendering="geometricPrecision"><circle cx="886.6" cy="238.2" r="8.7" fill="#fff" stroke="#000" stroke-width="3"/><polygon points="887.2,230.2 890.8000000000001,234.0 887.2,237.79999999999998 883.6,234.0" fill="#ffb400"/><polygon points="882.6,237.2 886.6,241.2 882.6,245.2 878.6,241.2" fill="#10b0f0"/><polygon points="890.2,238.2 894.0,242.0 890.2,245.79999999999998 886.4,242.0" fill="#ff0000"/></g>
<text x="903.5" y="244" font-family="Liberation Sans" font-size="16" fill="#000" font-weight="normal" text-anchor="start" textLength="57.5" lengthAdjust="spacingAndGlyphs" >8bit_OR</text>
<rect x="852.5" y="257.0" width="12" height="12" rx="2" fill="url(#exp)" stroke="#8e8e8e" stroke-width="1.3" shape-rendering="geometricPrecision"/>
<rect x="855.0" y="262" width="8" height="2" fill="#4a5fa8" />
<rect x="858.0" y="259" width="2" height="8" fill="#4a5fa8" />
<line x1="866" y1="263.5" x2="876" y2="263.5" stroke="#7a7a7a" stroke-width="1" stroke-dasharray="1 2"/>
<g shape-rendering="geometricPrecision"><circle cx="886.6" cy="262.2" r="8.7" fill="#fff" stroke="#000" stroke-width="3"/><polygon points="887.2,254.2 890.8000000000001,258.0 887.2,261.8 883.6,258.0" fill="#ffb400"/><polygon points="882.6,261.2 886.6,265.2 882.6,269.2 878.6,265.2" fill="#10b0f0"/><polygon points="890.2,262.2 894.0,266.0 890.2,269.8 886.4,266.0" fill="#ff0000"/></g>
<text x="903.5" y="268" font-family="Liberation Sans" font-size="16" fill="#000" font-weight="normal" text-anchor="start" textLength="32.5" lengthAdjust="spacingAndGlyphs" >AND</text>
<rect x="852.5" y="281.0" width="12" height="12" rx="2" fill="url(#exp)" stroke="#8e8e8e" stroke-width="1.3" shape-rendering="geometricPrecision"/>
<rect x="855.0" y="286" width="8" height="2" fill="#4a5fa8" />
<rect x="858.0" y="283" width="2" height="8" fill="#4a5fa8" />
<line x1="866" y1="287.5" x2="876" y2="287.5" stroke="#7a7a7a" stroke-width="1" stroke-dasharray="1 2"/>
<g shape-rendering="geometricPrecision"><circle cx="886.6" cy="286.2" r="8.7" fill="#fff" stroke="#000" stroke-width="3"/><polygon points="887.2,278.2 890.8000000000001,282.0 887.2,285.8 883.6,282.0" fill="#ffb400"/><polygon points="882.6,285.2 886.6,289.2 882.6,293.2 878.6,289.2" fill="#10b0f0"/><polygon points="890.2,286.2 894.0,290.0 890.2,293.8 886.4,290.0" fill="#ff0000"/></g>
<text x="903.5" y="292" font-family="Liberation Sans" font-size="16" fill="#000" font-weight="normal" text-anchor="start" textLength="102" lengthAdjust="spacingAndGlyphs" >Inverter_short</text>
<rect x="852.5" y="305.0" width="12" height="12" rx="2" fill="url(#exp)" stroke="#8e8e8e" stroke-width="1.3" shape-rendering="geometricPrecision"/>
<rect x="855.0" y="310" width="8" height="2" fill="#4a5fa8" />
<rect x="858.0" y="307" width="2" height="8" fill="#4a5fa8" />
<line x1="866" y1="311.5" x2="876" y2="311.5" stroke="#7a7a7a" stroke-width="1" stroke-dasharray="1 2"/>
<g shape-rendering="geometricPrecision"><circle cx="886.6" cy="310.2" r="8.7" fill="#fff" stroke="#000" stroke-width="3"/><polygon points="887.2,302.2 890.8000000000001,306.0 887.2,309.8 883.6,306.0" fill="#ffb400"/><polygon points="882.6,309.2 886.6,313.2 882.6,317.2 878.6,313.2" fill="#10b0f0"/><polygon points="890.2,310.2 894.0,314.0 890.2,317.8 886.4,314.0" fill="#ff0000"/></g>
<text x="903.5" y="316" font-family="Liberation Sans" font-size="16" fill="#000" font-weight="normal" text-anchor="start" textLength="43.5" lengthAdjust="spacingAndGlyphs" >NAND</text>
<rect x="852.5" y="329.0" width="12" height="12" rx="2" fill="url(#exp)" stroke="#8e8e8e" stroke-width="1.3" shape-rendering="geometricPrecision"/>
<rect x="855.0" y="334" width="8" height="2" fill="#4a5fa8" />
<rect x="858.0" y="331" width="2" height="8" fill="#4a5fa8" />
<line x1="866" y1="335.5" x2="876" y2="335.5" stroke="#7a7a7a" stroke-width="1" stroke-dasharray="1 2"/>
<g shape-rendering="geometricPrecision"><circle cx="886.6" cy="334.2" r="8.7" fill="#fff" stroke="#000" stroke-width="3"/><polygon points="887.2,326.2 890.8000000000001,330.0 887.2,333.8 883.6,330.0" fill="#ffb400"/><polygon points="882.6,333.2 886.6,337.2 882.6,341.2 878.6,337.2" fill="#10b0f0"/><polygon points="890.2,334.2 894.0,338.0 890.2,341.8 886.4,338.0" fill="#ff0000"/></g>
<text x="903.5" y="340" font-family="Liberation Sans" font-size="16" fill="#000" font-weight="normal" text-anchor="start" textLength="33" lengthAdjust="spacingAndGlyphs" >NOR</text>
<rect x="852.5" y="353.0" width="12" height="12" rx="2" fill="url(#exp)" stroke="#8e8e8e" stroke-width="1.3" shape-rendering="geometricPrecision"/>
<rect x="855.0" y="358" width="8" height="2" fill="#4a5fa8" />
<rect x="858.0" y="355" width="2" height="8" fill="#4a5fa8" />
<line x1="866" y1="359.5" x2="876" y2="359.5" stroke="#7a7a7a" stroke-width="1" stroke-dasharray="1 2"/>
<g shape-rendering="geometricPrecision"><circle cx="886.6" cy="358.2" r="8.7" fill="#fff" stroke="#000" stroke-width="3"/><polygon points="887.2,350.2 890.8000000000001,354.0 887.2,357.8 883.6,354.0" fill="#ffb400"/><polygon points="882.6,357.2 886.6,361.2 882.6,365.2 878.6,361.2" fill="#10b0f0"/><polygon points="890.2,358.2 894.0,362.0 890.2,365.8 886.4,362.0" fill="#ff0000"/></g>
<text x="903.5" y="364" font-family="Liberation Sans" font-size="16" fill="#000" font-weight="normal" text-anchor="start" textLength="23" lengthAdjust="spacingAndGlyphs" >OR</text>
<line x1="859" y1="383.5" x2="876" y2="383.5" stroke="#7a7a7a" stroke-width="1" stroke-dasharray="1 2"/>
<circle cx="886.3" cy="382.5" r="7.4" fill="#ff0000" shape-rendering="geometricPrecision"/>
<text x="903.5" y="388" font-family="Liberation Sans" font-size="16" fill="#000" font-weight="normal" text-anchor="start" textLength="97" lengthAdjust="spacingAndGlyphs" >OR_sim{sch}</text>
<line x1="859" y1="407.5" x2="876" y2="407.5" stroke="#7a7a7a" stroke-width="1" stroke-dasharray="1 2"/>
<circle cx="886.3" cy="406.5" r="7.4" fill="#ff0000" shape-rendering="geometricPrecision"/>
<text x="903.5" y="412" font-family="Liberation Sans" font-size="16" fill="#000" font-weight="normal" text-anchor="start" >Ring_Oscillator{sch}</text>
<rect x="852.5" y="425.0" width="12" height="12" rx="2" fill="url(#exp)" stroke="#8e8e8e" stroke-width="1.3" shape-rendering="geometricPrecision"/>
<rect x="855.0" y="430" width="8" height="2" fill="#4a5fa8" />
<rect x="858.0" y="427" width="2" height="8" fill="#4a5fa8" />
<line x1="866" y1="431.5" x2="876" y2="431.5" stroke="#7a7a7a" stroke-width="1" stroke-dasharray="1 2"/>
<g shape-rendering="geometricPrecision"><circle cx="886.6" cy="430.2" r="8.7" fill="#fff" stroke="#000" stroke-width="3"/><polygon points="887.2,422.2 890.8000000000001,426.0 887.2,429.8 883.6,426.0" fill="#ffb400"/><polygon points="882.6,429.2 886.6,433.2 882.6,437.2 878.6,433.2" fill="#10b0f0"/><polygon points="890.2,430.2 894.0,434.0 890.2,437.8 886.4,434.0" fill="#ff0000"/></g>
<text x="903.5" y="436" font-family="Liberation Sans" font-size="16" fill="#000" font-weight="normal" text-anchor="start" >Ring_Oscillator</text>
<rect x="795.5" y="449.0" width="12" height="12" rx="2" fill="url(#exp)" stroke="#8e8e8e" stroke-width="1.3" shape-rendering="geometricPrecision"/>
<rect x="798.0" y="454" width="8" height="2" fill="#4a5fa8" />
<rect x="801.0" y="451" width="2" height="8" fill="#4a5fa8" />
<line x1="809" y1="455.5" x2="818" y2="455.5" stroke="#7a7a7a" stroke-width="1" stroke-dasharray="1 2"/>
<g shape-rendering="geometricPrecision"><circle cx="841.1" cy="454" r="11" fill="#fff" stroke="#000" stroke-width="1.6"/><path d="M838.9,445.5 L843.3,445.5 L842.5,457 L839.7,457 Z" fill="#ff1010"/><rect x="839.4" y="458.6" width="3.4" height="3" fill="#ff1010"/></g>
<text x="871.2" y="460" font-family="Liberation Sans" font-size="16" fill="#000" font-weight="normal" text-anchor="start" textLength="63" lengthAdjust="spacingAndGlyphs" >ERRORS</text>
<line x1="802" y1="478.5" x2="818" y2="478.5" stroke="#7a7a7a" stroke-width="1" stroke-dasharray="1 2"/>
<g shape-rendering="geometricPrecision"><path d="M825.5,483.5 Q827.5,471.5 840.5,468.5 Q832,474 826.5,484 Z" fill="#101830" stroke="#101830" stroke-width="1.6"/><path d="M831,473 L856,489.5" stroke="#8c8c70" stroke-width="1.8"/></g>
<text x="871.2" y="483.5" font-family="Liberation Sans" font-size="16" fill="#000" font-weight="normal" text-anchor="start" textLength="41" lengthAdjust="spacingAndGlyphs" >JOBS</text>
</g>
<g clip-path="url(#cv)">
<text x="1545" y="219.6" font-family="Liberation Sans" font-size="26.7" fill="#1a1a1a" font-weight="normal" text-anchor="middle" textLength="184" lengthAdjust="spacingAndGlyphs" >vdd vdd 0 DC 5</text>
<text x="1545.3" y="246.8" font-family="Liberation Sans" font-size="26.7" fill="#1a1a1a" font-weight="normal" text-anchor="middle" textLength="128.5" lengthAdjust="spacingAndGlyphs" >.tran 0 30n</text>
<text x="1031.2" y="274.7" font-family="Liberation Sans" font-size="26.93" fill="#1a1a1a" font-weight="normal" text-anchor="start" >.include Z:\tabrackeryazzie\Spring 2021\ENGR 338 - Digital Electronics\Lab 7\8bit_AND.spi</text>
<polygon points="1088,367 1622,367 1622,384 1088,384 1083,379 1083,372" fill="url(#bus)"/>
<polygon points="1488,313 1622,313 1622,328 1488,328 1483,324 1483,317" fill="url(#bus)"/>
<rect x="1731" y="340" width="142" height="15" fill="url(#bus)" />
<text x="1538.5" y="326" font-family="Liberation Sans" font-size="13" fill="#2a4a2a" font-weight="normal" text-anchor="middle" textLength="35" lengthAdjust="spacingAndGlyphs" opacity="0.9">A[0:7]</text>
<text x="1535.5" y="380.5" font-family="Liberation Sans" font-size="13" fill="#2a4a2a" font-weight="normal" text-anchor="middle" textLength="35" lengthAdjust="spacingAndGlyphs" opacity="0.9">B[0:7]</text>
<text x="1834.5" y="353.5" font-family="Liberation Sans" font-size="13" fill="#2a4a2a" font-weight="normal" text-anchor="middle" textLength="64" lengthAdjust="spacingAndGlyphs" opacity="0.9">AandB[0:7]</text>
<rect x="1593" y="320" width="1" height="1" fill="#0000ff" />
<rect x="1593" y="375" width="1" height="1" fill="#0000ff" />
<rect x="1787" y="348" width="1" height="1" fill="#0000ff" />
<path d="M1622,306.5 L1704,306.5 A33.5,41 0 0 1 1704,388.5 L1622,388.5 Z" fill="none" stroke="#000" stroke-width="3.2" stroke-linejoin="round" shape-rendering="geometricPrecision"/>
<text x="1670.5" y="353.8" font-family="Liberation Sans" font-size="13.7" fill="#222" font-weight="normal" text-anchor="middle" textLength="30" lengthAdjust="spacingAndGlyphs" >AND</text>
<rect x="1681" y="417" width="17" height="1.5" fill="#000" />
<rect x="1689" y="409" width="1.5" height="17" fill="#000" />
<rect x="1090" y="375" width="2" height="35" fill="#0000ff" />
<rect x="1146" y="375" width="2" height="83" fill="#0000ff" />
<rect x="1201" y="375" width="2" height="35" fill="#0000ff" />
<rect x="1255" y="375" width="2" height="83" fill="#0000ff" />
<rect x="1311" y="375" width="2" height="35" fill="#0000ff" />
<rect x="1366" y="375" width="2" height="83" fill="#0000ff" />
<rect x="1420" y="375" width="2" height="35" fill="#0000ff" />
<rect x="1475.5" y="375" width="2" height="138" fill="#0000ff" />
<rect x="1050" y="409" width="372" height="2" fill="#0000ff" />
<rect x="1146" y="457" width="331.5" height="2" fill="#0000ff" />
<rect x="1050" y="409" width="2" height="29" fill="#0000ff" />
<rect x="1050" y="438" width="2" height="27" fill="#ff0000" />
<rect x="1029" y="464.5" width="43" height="2" fill="#ff0000" />
<rect x="1033.5" y="470.5" width="33" height="2" fill="#ff0000" />
<rect x="1040" y="478" width="22" height="2" fill="#ff0000" />
<rect x="1044" y="484" width="12" height="2" fill="#ff0000" />
<rect x="1050" y="491.5" width="2" height="2" fill="#ff0000" />
<g shape-rendering="geometricPrecision">
<circle cx="1091" cy="375.2" r="3.8" fill="#0000ff"/>
<circle cx="1147" cy="375.2" r="3.8" fill="#0000ff"/>
<circle cx="1202" cy="375.2" r="3.8" fill="#0000ff"/>
<circle cx="1256" cy="375.2" r="3.8" fill="#0000ff"/>
<circle cx="1312" cy="375.2" r="3.8" fill="#0000ff"/>
<circle cx="1367" cy="375.2" r="3.8" fill="#0000ff"/>
<circle cx="1421" cy="375.2" r="3.8" fill="#0000ff"/>
<circle cx="1476.5" cy="375.2" r="3.8" fill="#0000ff"/>
<circle cx="1202" cy="410" r="3.8" fill="#0000ff"/>
<circle cx="1312" cy="410" r="3.8" fill="#0000ff"/>
<circle cx="1367" cy="458" r="3.8" fill="#0000ff"/>
<circle cx="1476.5" cy="458" r="3.8" fill="#0000ff"/>
<polygon points="1091,404 1097,410 1091,416 1085,410" fill="#0000ff"/>
<polygon points="1256,452 1262,458 1256,464 1250,458" fill="#0000ff"/>
</g>
<text x="1091" y="398.6" font-family="Liberation Sans" font-size="13" fill="#333" font-weight="normal" text-anchor="middle" textLength="24" lengthAdjust="spacingAndGlyphs" >B[0]</text>
<text x="1147" y="422.5" font-family="Liberation Sans" font-size="13" fill="#333" font-weight="normal" text-anchor="middle" textLength="24" lengthAdjust="spacingAndGlyphs" >B[1]</text>
<text x="1202" y="398.6" font-family="Liberation Sans" font-size="13" fill="#333" font-weight="normal" text-anchor="middle" textLength="24" lengthAdjust="spacingAndGlyphs" >B[2]</text>
<text x="1256" y="422.5" font-family="Liberation Sans" font-size="13" fill="#333" font-weight="normal" text-anchor="middle" textLength="24" lengthAdjust="spacingAndGlyphs" >B[3]</text>
<text x="1312" y="398.6" font-family="Liberation Sans" font-size="13" fill="#333" font-weight="normal" text-anchor="middle" textLength="24" lengthAdjust="spacingAndGlyphs" >B[4]</text>
<text x="1367" y="422.5" font-family="Liberation Sans" font-size="13" fill="#333" font-weight="normal" text-anchor="middle" textLength="24" lengthAdjust="spacingAndGlyphs" >B[5]</text>
<text x="1421" y="398.6" font-family="Liberation Sans" font-size="13" fill="#333" font-weight="normal" text-anchor="middle" textLength="24" lengthAdjust="spacingAndGlyphs" >B[6]</text>
<text x="1476.5" y="422.5" font-family="Liberation Sans" font-size="13" fill="#333" font-weight="normal" text-anchor="middle" textLength="24" lengthAdjust="spacingAndGlyphs" >B[7]</text>
<g shape-rendering="geometricPrecision" fill="none" stroke="#ff0000" stroke-width="1.5">
<polygon points="1440.42,323.62 1437.50,330.69 1432.09,336.10 1425.02,339.02 1417.38,339.02 1410.31,336.10 1404.90,330.69 1401.98,323.62 1401.98,315.98 1404.90,308.91 1410.31,303.50 1417.38,300.58 1425.02,300.58 1432.09,303.50 1437.50,308.91 1440.42,315.98"/>
<polygon points="1435.91,322.73 1433.67,328.13 1429.53,332.27 1424.13,334.51 1418.27,334.51 1412.87,332.27 1408.73,328.13 1406.49,322.73 1406.49,316.87 1408.73,311.47 1412.87,307.33 1418.27,305.09 1424.13,305.09 1429.53,307.33 1433.67,311.47 1435.91,316.87"/>
<polygon points="1497.59,517.44 1494.43,525.08 1488.58,530.93 1480.94,534.09 1472.66,534.09 1465.02,530.93 1459.17,525.08 1456.01,517.44 1456.01,509.16 1459.17,501.52 1465.02,495.67 1472.66,492.51 1480.94,492.51 1488.58,495.67 1494.43,501.52 1497.59,509.16"/>
<polygon points="1492.88,516.50 1490.44,522.41 1485.91,526.94 1480.00,529.38 1473.60,529.38 1467.69,526.94 1463.16,522.41 1460.72,516.50 1460.72,510.10 1463.16,504.19 1467.69,499.66 1473.60,497.22 1480.00,497.22 1485.91,499.66 1490.44,504.19 1492.88,510.10"/>
<rect x="1470.5" y="306.5" width="27.5" height="28.5"/>
</g>
<rect x="1421" y="319" width="64" height="2" fill="#0000ff" />
<path d="M1487.7,311 L1487.7,325 Q1487.7,329.5 1483,329.5 Q1479,329.5 1478.5,325.5" fill="none" stroke="#111" stroke-width="2" shape-rendering="geometricPrecision"/>
<rect x="1475.5" y="458" width="2" height="55" fill="#0000ff" />
</g>
</svg></body></html>
